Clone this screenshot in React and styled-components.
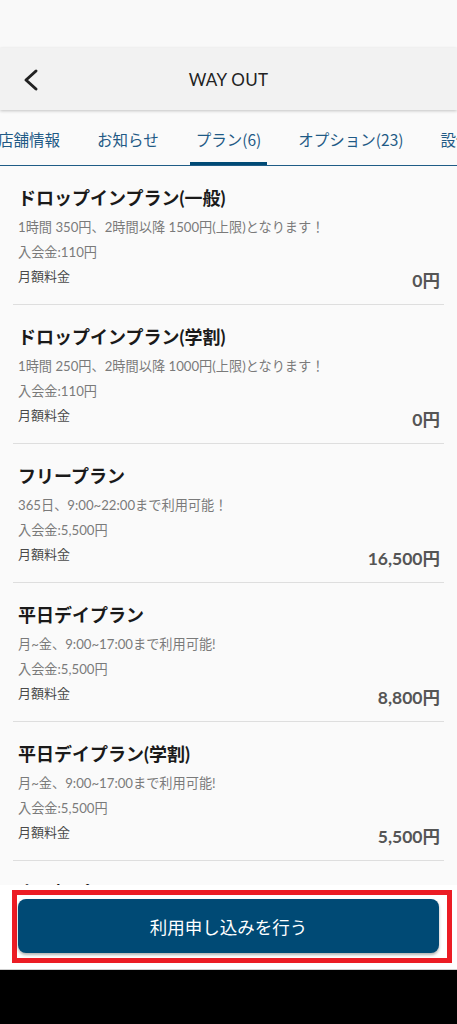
import styled, { createGlobalStyle } from "styled-components";

const GlobalStyle = createGlobalStyle`
  html, body {
    margin: 0;
    padding: 0;
    background: #000;
  }
  * {
    box-sizing: border-box;
  }
`;

const plans = [
  {
    name: "ドロップインプラン(一般)",
    desc: "1時間 350円、2時間以降 1500円(上限)となります！",
    fee: "110円",
    price: "0円",
  },
  {
    name: "ドロップインプラン(学割)",
    desc: "1時間 250円、2時間以降 1000円(上限)となります！",
    fee: "110円",
    price: "0円",
  },
  {
    name: "フリープラン",
    desc: "365日、9:00~22:00まで利用可能！",
    fee: "5,500円",
    price: "16,500円",
  },
  {
    name: "平日デイプラン",
    desc: "月~金、9:00~17:00まで利用可能!",
    fee: "5,500円",
    price: "8,800円",
  },
  {
    name: "平日デイプラン(学割)",
    desc: "月~金、9:00~17:00まで利用可能!",
    fee: "5,500円",
    price: "5,500円",
  },
  {
    name: "土日祝プラン",
    desc: "土日祝、9:00~22:00まで利用可能！",
    fee: "5,500円",
    price: "5,500円",
  },
];

const tabs = ["店舗情報", "お知らせ", "プラン(6)", "オプション(23)", "設備"];

export default function App() {
  return (
    <>
      <GlobalStyle />
      <Screen>
        <StatusBar />
        <Header>
          <BackButton aria-label="戻る">
            <svg width="20" height="24" viewBox="0 0 20 24">
              <polyline
                points="14,3 4,12 14,21"
                fill="none"
                stroke="#222"
                strokeWidth="3"
                strokeLinecap="round"
                strokeLinejoin="round"
              />
            </svg>
          </BackButton>
          <Title>WAY OUT</Title>
        </Header>
        <TabBar>
          {tabs.map((t) => (
            <Tab key={t} $active={t === "プラン(6)"}>
              {t}
            </Tab>
          ))}
        </TabBar>
        <PlanList>
          {plans.map((p) => (
            <PlanCard key={p.name}>
              <PlanName>{p.name}</PlanName>
              <PlanLine $top>{p.desc}</PlanLine>
              <PlanLine>入会金:{p.fee}</PlanLine>
              <PriceRow>
                <PriceLabel>月額料金</PriceLabel>
                <Price>{p.price}</Price>
              </PriceRow>
            </PlanCard>
          ))}
        </PlanList>
        <Footer>
          <Highlight>
            <ApplyButton>利用申し込みを行う</ApplyButton>
          </Highlight>
        </Footer>
        <NavBar />
      </Screen>
    </>
  );
}

const Screen = styled.div`
  width: 457px;
  height: 1024px;
  display: flex;
  flex-direction: column;
  overflow: hidden;
  background: #fafafa;
  font-family: "Lato", "Noto Sans CJK JP", sans-serif;
`;

const StatusBar = styled.div`
  height: 48px;
  flex: none;
  background: #f9f9f9;
`;

const Header = styled.header`
  height: 62px;
  flex: none;
  display: flex;
  align-items: center;
  justify-content: center;
  position: relative;
  background: #f2f2f2;
  box-shadow: 0 1px 3px rgba(0, 0, 0, 0.22);
  z-index: 2;
`;

const BackButton = styled.button`
  position: absolute;
  left: 22px;
  top: 20px;
  border: 0;
  padding: 0;
  background: none;
  display: flex;
`;

const Title = styled.h1`
  margin: 0;
  font-size: 17px;
  font-weight: 400;
  letter-spacing: 0.3px;
  color: #222;
`;

const TabBar = styled.nav`
  height: 56px;
  flex: none;
  display: flex;
  align-items: stretch;
  background: #fafafa;
  border-bottom: 1px solid #1f5c86;
  white-space: nowrap;
  margin-left: -20.5px;
  margin-right: -200px;
`;

const Tab = styled.div`
  position: relative;
  display: flex;
  align-items: center;
  padding: 3px 18.5px 0;
  font-family: "Noto Sans CJK JP", sans-serif;
  font-size: 15.5px;
  color: #1f5a86;

  &::after {
    content: "";
    position: absolute;
    left: 12.5px;
    right: 13px;
    bottom: 0;
    height: 3px;
    background: ${(p) => (p.$active ? "#004a75" : "transparent")};
  }
`;

const PlanList = styled.main`
  flex: 1;
  min-height: 0;
  overflow: hidden;
`;

const PlanCard = styled.section`
  margin: 0 13px;
  padding: 20px 4px 13px 5px;
  border-bottom: 1px solid #dedede;
`;

const PlanName = styled.h2`
  margin: 0;
  font-size: 18px;
  line-height: 24px;
  font-weight: 700;
  color: #1a1a1a;
`;

const PlanLine = styled.p`
  margin: ${(p) => (p.$top ? "5px" : "0")} 0 0;
  font-size: 13.2px;
  line-height: 25px;
  color: #7a7a7a;
`;

const PriceRow = styled.div`
  height: 26px;
  display: flex;
  justify-content: space-between;
  align-items: flex-start;
`;

const PriceLabel = styled.span`
  font-size: 13px;
  line-height: 22px;
  color: #4a4a4a;
`;

const Price = styled.span`
  margin-top: 6px;
  font-size: 17.5px;
  line-height: 20px;
  font-weight: 700;
  color: #555;
`;

const Footer = styled.footer`
  height: 85px;
  flex: none;
  padding: 5px 5px 7px 12px;
  background: #fff;
  border-bottom: 1px solid #cfcfcf;
`;

const Highlight = styled.div`
  height: 73px;
  border: 5px solid #ec1c24;
  padding: 4px 8px 5px 1px;
  display: flex;
`;

const ApplyButton = styled.button`
  flex: 1;
  border: 0;
  border-radius: 8px;
  background: #004a75;
  color: #fff;
  font-family: "Noto Sans CJK JP", sans-serif;
  font-size: 17.5px;
  box-shadow: 0 2px 3px rgba(0, 0, 0, 0.3);
`;

const NavBar = styled.div`
  height: 54px;
  flex: none;
  background: #000;
`;
